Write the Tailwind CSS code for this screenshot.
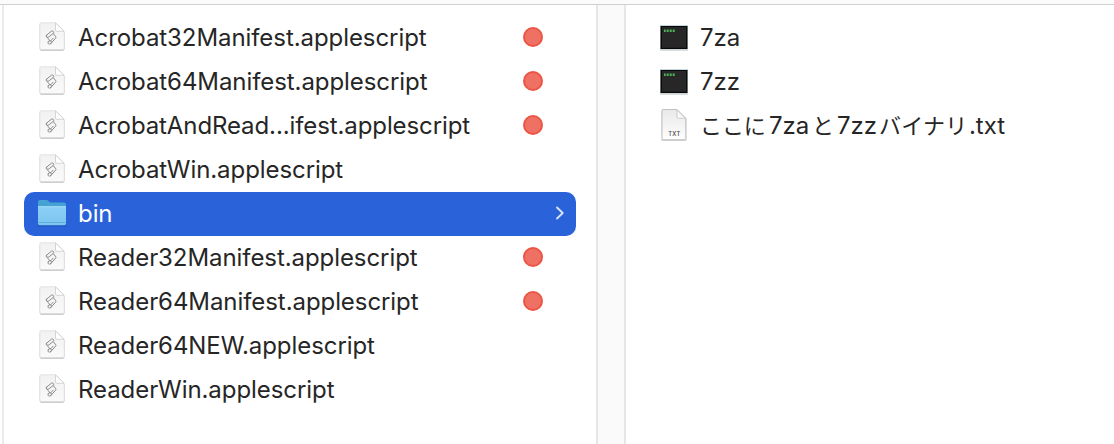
<!DOCTYPE html>
<html lang="ja">
<head>
<meta charset="utf-8">
<title>bin</title>
<script src="https://cdn.jsdelivr.net/npm/@tailwindcss/browser@4"></script>
</head>
<body class="h-[444px] w-[1114px] overflow-hidden bg-white font-['Inter','Noto_Sans_CJK_JP',sans-serif] text-[24px] tracking-[-0.07px] text-[#262626]">
<svg class="absolute size-0">
  <defs>
    <linearGradient id="paper" x1="0" y1="0" x2="0" y2="1"><stop offset="0" stop-color="#f1f1f1"/><stop offset="1" stop-color="#fafafa"/></linearGradient>
    <linearGradient id="txtpaper" x1="0" y1="0" x2="0" y2="1"><stop offset="0" stop-color="#e9e9e9"/><stop offset="1" stop-color="#fefefe"/></linearGradient>
    <linearGradient id="fold" x1="0" y1="1" x2="1" y2="0"><stop offset="0" stop-color="#ffffff"/><stop offset=".5" stop-color="#f4f4f4"/><stop offset="1" stop-color="#d8d8d8"/></linearGradient>
    <linearGradient id="front" x1="0" y1="0" x2="0" y2="1"><stop offset="0" stop-color="#8bd0f5"/><stop offset="1" stop-color="#7cc5f0"/></linearGradient>
    <symbol id="script" viewBox="0 0 32 34">
      <path d="M5.500 3H21l7.500 8.500V28a1.800 1.800 0 0 1-1.800 1.800H5.500A1.800 1.800 0 0 1 3.700 28V4.800A1.800 1.800 0 0 1 5.500 3Z" fill="#bdbdbd" transform="translate(0 .9)"/>
      <path d="M5.300 2.700H19.500L28.300 11.500V28a1.500 1.500 0 0 1-1.500 1.500H5.300A1.500 1.500 0 0 1 3.800 28V4.200A1.500 1.500 0 0 1 5.300 2.700Z" fill="url(#paper)" stroke="#dddddd" stroke-width=".8"/>
      <path d="M19.500 2.900V10a1.300 1.300 0 0 0 1.300 1.300H28Z" fill="#fff" stroke="#cbcbcb" stroke-width=".8"/>
      <g fill="none" stroke="#8a8a8a" stroke-width="1" stroke-linejoin="round" stroke-linecap="round">
        <path d="M10.300 15.400 15.300 11.300C16.800 10.200 18.500 12 17.400 13.300L13.200 16.700C11.700 17.900 9.300 16.600 10.300 15.400Z"/>
        <path d="M10.600 16.800 13.600 20.300 12.200 21.700M17.400 13.700 19.800 16.800Q20.200 17.600 19.600 18.200L14.800 23.600"/>
        <path d="M14.800 20.700C13.500 20.200 11.500 21.600 12 23.100C12.500 24.500 14.200 24.400 14.900 23.500C15.600 22.500 15.300 21 14.800 20.700L17.200 18.200"/>
      </g>
    </symbol>
    <symbol id="terminal" viewBox="0 0 32 30">
      <rect x="2" y="3.500" width="28" height="24.200" rx="1" fill="#9c9c9c" opacity=".45"/>
      <rect x="2" y="2" width="28" height="24.500" fill="#c3d9df"/>
      <rect x="2.500" y="3" width="27" height="23" fill="#090909"/>
      <rect x="4" y="4" width="24.200" height="20.800" fill="#272727"/>
      <path d="M6 7.700h2.300M9 7.700h2.300M12 7.700h2.300M15 7.700h2" stroke="#4bb456" stroke-width="2.400" stroke-dasharray="1.200 .3"/>
    </symbol>
  </defs>
</svg>
<div class="flex h-full flex-col">
  <div class="h-[5px] shrink-0 border-b border-[#d0d0d0] bg-[#fbfbfb]"></div>
  <main class="flex flex-1">
    <div class="w-1 border-r-2 border-[#ebebeb]"></div>
    <ul class="w-[592px] px-5 pt-[11px]">
      <li class="flex h-11 items-center pl-3"><svg class="mb-[2px] mr-[10px] h-[34px] w-8"><use href="#script"/></svg><span class="w-[445px] whitespace-nowrap">Acrobat32Manifest.applescript</span><i class="mb-[2px] size-5 rounded-full border-2 border-[#ec5545] bg-[#ee7164]"></i></li>
      <li class="flex h-11 items-center pl-3"><svg class="mb-[2px] mr-[10px] h-[34px] w-8"><use href="#script"/></svg><span class="w-[445px] whitespace-nowrap">Acrobat64Manifest.applescript</span><i class="mb-[2px] size-5 rounded-full border-2 border-[#ec5545] bg-[#ee7164]"></i></li>
      <li class="flex h-11 items-center pl-3"><svg class="mb-[2px] mr-[10px] h-[34px] w-8"><use href="#script"/></svg><span class="w-[445px] whitespace-nowrap tracking-[-0.1px]">AcrobatAndRead...ifest.applescript</span><i class="mb-[2px] size-5 rounded-full border-2 border-[#ec5545] bg-[#ee7164]"></i></li>
      <li class="flex h-11 items-center pl-3"><svg class="mb-[2px] mr-[10px] h-[34px] w-8"><use href="#script"/></svg><span class="whitespace-nowrap">AcrobatWin.applescript</span></li>
      <li class="flex h-11 items-center rounded-[10px] bg-[#2962d9] pl-3 text-white">
        <svg class="mb-[2px] mr-[10px] h-[34px] w-8" viewBox="0 0 32 34">
          <path d="M2 6.500Q2 4.500 4 4.500H10.500Q11.500 4.500 12.500 5.500L14 7H28Q30 7 30 9V29Q30 30.500 28.500 30.500H3.500Q2 30.500 2 29Z" fill="#1e4b9c" opacity=".55"/>
          <path d="M2 6Q2 4 4 4H10.500Q11.500 4 12.500 5L14 6.500H28Q30 6.500 30 8.500V27H2Z" fill="#45a3d3"/>
          <path d="M2 10.500H30V27.500Q30 29.300 28.300 29.300H3.700Q2 29.300 2 27.500Z" fill="url(#front)"/>
          <path d="M2 10.700H30" stroke="#a2dcf8"/><path d="M2.300 26.500H29.700" stroke="#5eaee0"/>
        </svg>
        <span class="w-[474px]">bin</span>
        <svg class="mb-[2px] h-[14px] w-4" viewBox="0 0 16 14" fill="none" stroke="#d8e3fa" stroke-width="1.900" stroke-linecap="round" stroke-linejoin="round"><path d="M5 1.500 10.700 7 5 12.500"/></svg>
      </li>
      <li class="flex h-11 items-center pl-3"><svg class="mb-[2px] mr-[10px] h-[34px] w-8"><use href="#script"/></svg><span class="w-[445px] whitespace-nowrap">Reader32Manifest.applescript</span><i class="mb-[2px] size-5 rounded-full border-2 border-[#ec5545] bg-[#ee7164]"></i></li>
      <li class="flex h-11 items-center pl-3"><svg class="mb-[2px] mr-[10px] h-[34px] w-8"><use href="#script"/></svg><span class="w-[445px] whitespace-nowrap">Reader64Manifest.applescript</span><i class="mb-[2px] size-5 rounded-full border-2 border-[#ec5545] bg-[#ee7164]"></i></li>
      <li class="flex h-11 items-center pl-3"><svg class="mb-[2px] mr-[10px] h-[34px] w-8"><use href="#script"/></svg><span class="whitespace-nowrap">Reader64NEW.applescript</span></li>
      <li class="flex h-11 items-center pl-3"><svg class="mb-[2px] mr-[10px] h-[34px] w-8"><use href="#script"/></svg><span class="whitespace-nowrap">ReaderWin.applescript</span></li>
    </ul>
    <div class="w-[30px] border-x-2 border-[#e6e6e6] bg-[#fafafa]"></div>
    <ul class="flex-1 pl-8 pt-[11px]">
      <li class="flex h-11 items-center"><svg class="mr-[10px] h-[30px] w-8"><use href="#terminal"/></svg><span>7za</span></li>
      <li class="flex h-11 items-center"><svg class="mr-[10px] h-[30px] w-8"><use href="#terminal"/></svg><span>7zz</span></li>
      <li class="flex h-11 items-center">
        <svg class="mb-[2px] mr-[10px] h-[34px] w-8 shrink-0" viewBox="0 0 32 34">
          <path d="M3.500 2.500H20L28.500 11V33H3.500Z" fill="#aaa" opacity=".5"/>
          <path d="M5 1.500H19L27.800 10.300V30.500Q27.800 31.700 26.600 31.700H5.200Q4 31.700 4 30.500V2.500Q4 1.500 5 1.500Z" fill="url(#txtpaper)" stroke="#b5b5b5" stroke-width=".8"/>
          <path d="M19 1.800V9.200Q19 10.300 20.100 10.300H27.500Z" fill="url(#fold)" stroke="#bbb" stroke-width=".7"/>
          <text x="16.200" y="28" text-anchor="middle" textLength="12" font-size="5.800" font-weight="500" fill="#444">TXT</text>
        </svg>
        <span class="flex items-baseline whitespace-nowrap"><span class="w-[69px] text-[22px]">ここに</span><span class="w-[43px]">7za</span><span class="w-[25px] text-[22px]">と</span><span class="w-[42px]">7zz</span><span class="w-[90px] text-[22px] tracking-[0.2px]">バイナリ</span><span>.txt</span></span>
      </li>
    </ul>
  </main>
</div>
</body>
</html>
